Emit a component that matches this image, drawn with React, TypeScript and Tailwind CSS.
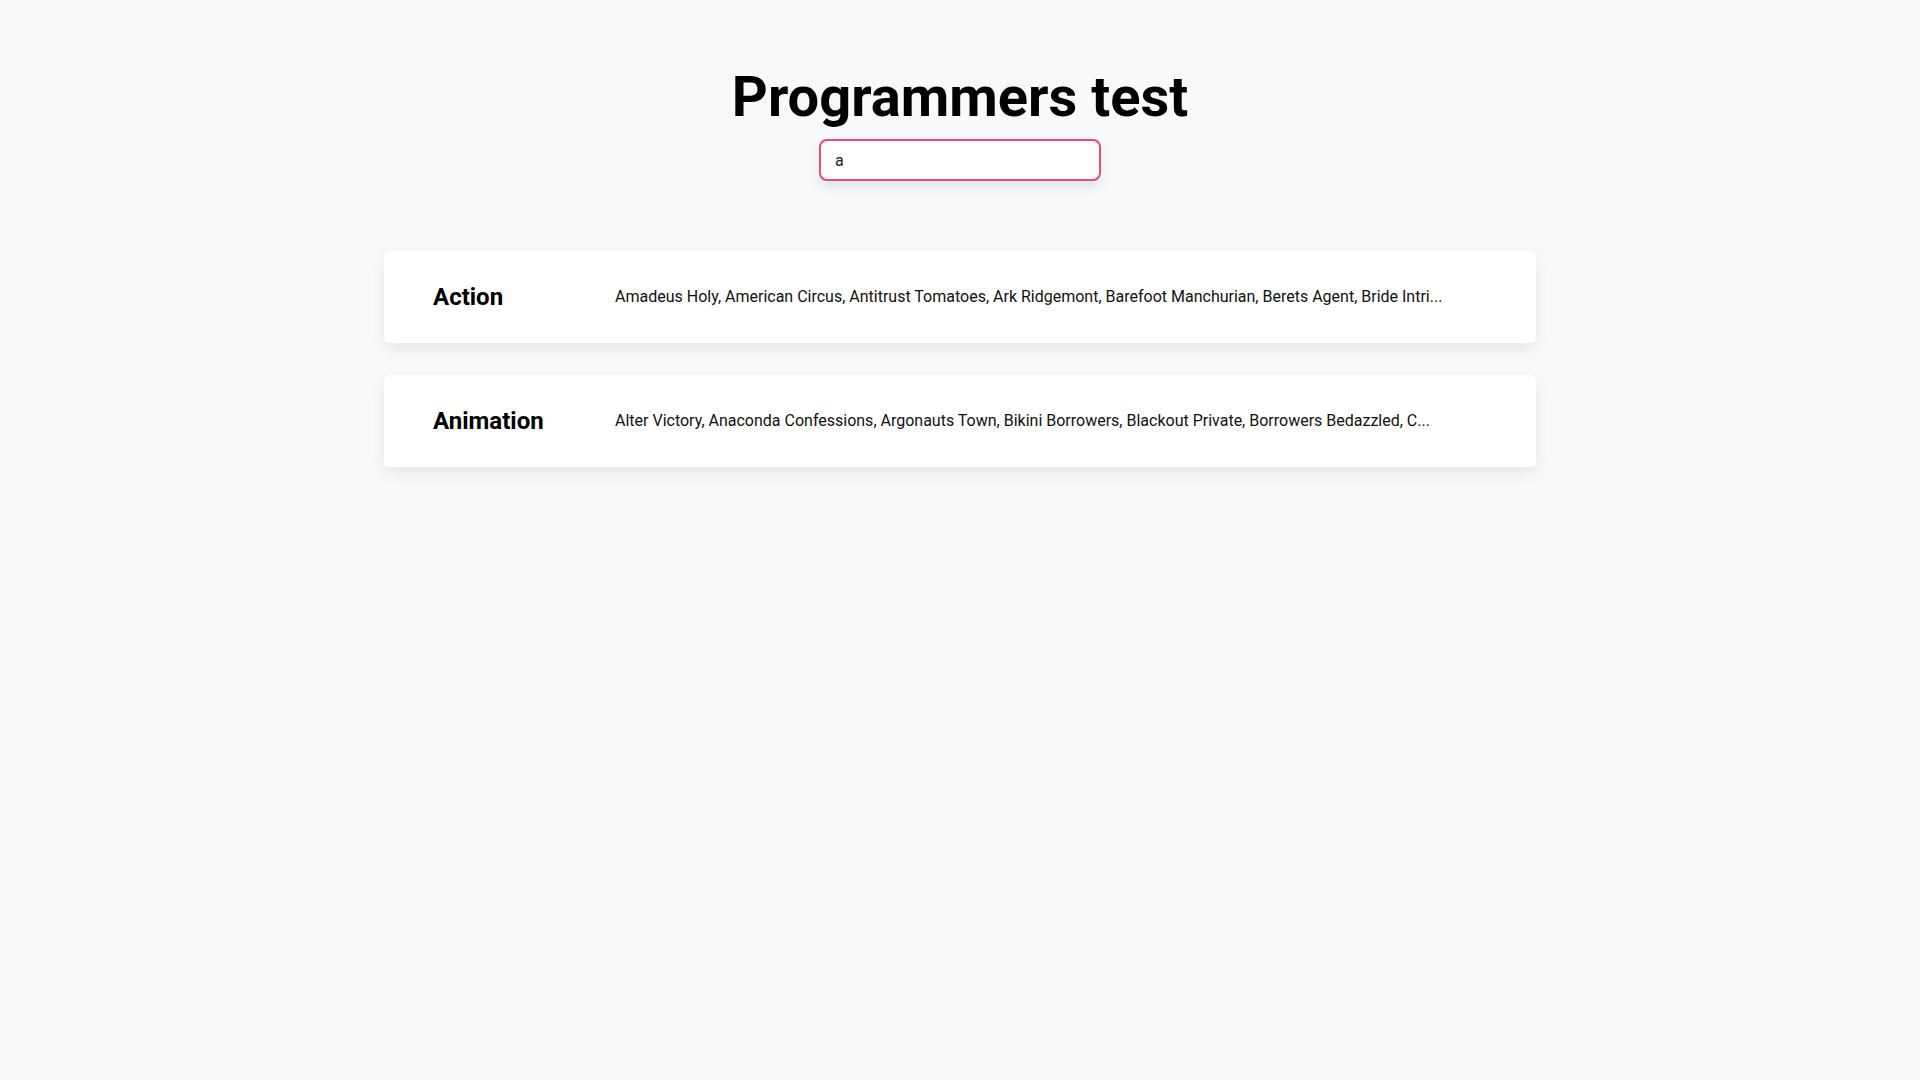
const genres = [
  {
    name: "Action",
    movies:
      "Amadeus Holy, American Circus, Antitrust Tomatoes, Ark Ridgemont, Barefoot Manchurian, Berets Agent, Bride Intri...",
  },
  {
    name: "Animation",
    movies:
      "Alter Victory, Anaconda Confessions, Argonauts Town, Bikini Borrowers, Blackout Private, Borrowers Bedazzled, C...",
  },
];

export default function App() {
  return (
    <div className="min-h-screen bg-[#f8f9fa] font-['Roboto',sans-serif] text-black">
      <div className="flex flex-col items-center pt-[64px]">
        <h1 className="text-[56px] font-bold leading-[67px]">Programmers test</h1>
        <input
          type="text"
          defaultValue="a"
          className="mt-2 h-[42px] w-[282px] rounded-lg border-2 border-[#e84a7f] bg-white px-[14px] text-base text-[#222] shadow-[0_5px_12px_rgba(0,0,0,0.09)] outline-none"
        />
      </div>

      <div className="mx-auto mt-[70px] flex max-w-6xl flex-col gap-8">
        {genres.map((genre) => (
          <div
            key={genre.name}
            className="flex h-[92px] items-center rounded-md bg-white pl-[49px] pr-10 shadow-[0_6px_14px_rgba(0,0,0,0.08)]"
          >
            <div className="w-[182px] shrink-0 text-2xl font-bold">{genre.name}</div>
            <div className="text-base text-[#111]">{genre.movies}</div>
          </div>
        ))}
      </div>
    </div>
  );
}
